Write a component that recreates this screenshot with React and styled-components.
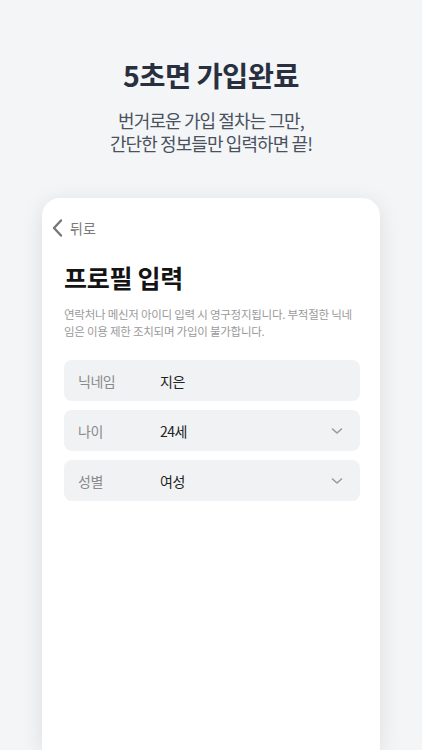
import React from "react";
import styled, { createGlobalStyle } from "styled-components";

const GlobalStyle = createGlobalStyle`
  html, body {
    margin: 0;
    padding: 0;
    background: #f4f5f7;
  }
  body {
    font-family: "Noto Sans CJK KR", "Noto Sans", sans-serif;
    overflow: hidden;
  }
`;

const Page = styled.div`
  height: 750px;
  overflow: hidden;
  background: #f4f5f7;
  display: flex;
  flex-direction: column;
  align-items: center;
`;

const Headline = styled.h1`
  margin: 54px 0 0;
  font-size: 28.5px;
  line-height: 42px;
  font-weight: 700;
  color: #283040;
  letter-spacing: -0.6px;
`;

const SubText = styled.p`
  margin: 13px 0 0;
  font-size: 18px;
  line-height: 23px;
  font-weight: 400;
  color: #4a5260;
  text-align: center;
  letter-spacing: -0.9px;
`;

const Card = styled.div`
  margin-top: 43px;
  width: 338px;
  flex: 1;
  background: #fff;
  border-radius: 18px 18px 0 0;
  box-shadow: 0 4px 22px rgba(0, 0, 0, 0.1);
  padding: 20px 20px 0 22px;
  box-sizing: border-box;
`;

const BackButton = styled.button`
  display: flex;
  align-items: center;
  gap: 4px;
  border: none;
  background: none;
  padding: 0;
  margin-left: -14px;
  font-family: inherit;
  font-size: 14px;
  color: #7a7a7a;
  cursor: pointer;
`;

const Title = styled.h2`
  margin: 22px 0 0;
  font-size: 25px;
  line-height: 34px;
  font-weight: 700;
  color: #141414;
  letter-spacing: -0.3px;
`;

const Notice = styled.p`
  margin: 12px 0 0;
  font-size: 11.5px;
  line-height: 17px;
  color: #9a9a9a;
  letter-spacing: -0.25px;
  padding-right: 4px;
`;

const Fields = styled.div`
  margin-top: 20px;
  display: flex;
  flex-direction: column;
  gap: 9px;
  width: 296px;
`;

const Field = styled.div`
  height: 41px;
  border-radius: 8px;
  background: #f0f2f4;
  display: flex;
  align-items: center;
  padding: 0 17px 0 14px;
`;

const Label = styled.span`
  width: 82px;
  font-size: 14px;
  color: #8a8a8a;
  letter-spacing: -0.5px;
`;

const Value = styled.span`
  flex: 1;
  font-size: 14px;
  color: #222;
  letter-spacing: -0.5px;
`;

const Chevron = () => (
  <svg width="12" height="10" viewBox="0 0 12 10">
    <path d="M1.5 3 L6 7 L10.5 3" fill="none" stroke="#9a9a9a" strokeWidth="1.6" strokeLinecap="round" strokeLinejoin="round" />
  </svg>
);

const BackIcon = () => (
  <svg width="16" height="20" viewBox="0 0 16 20">
    <path d="M11 2.5 L4 10 L11 17.5" fill="none" stroke="#777" strokeWidth="2.4" strokeLinecap="round" strokeLinejoin="round" />
  </svg>
);

const fields = [
  { label: "닉네임", value: "지은" },
  { label: "나이", value: "24세", select: true },
  { label: "성별", value: "여성", select: true },
];

function App() {
  return (
    <>
      <GlobalStyle />
      <Page>
        <Headline>5초면 가입완료</Headline>
        <SubText>
          번거로운 가입 절차는 그만,
          <br />
          간단한 정보들만 입력하면 끝!
        </SubText>
        <Card>
          <BackButton>
            <BackIcon />
            뒤로
          </BackButton>
          <Title>프로필 입력</Title>
          <Notice>
            연락처나 메신저 아이디 입력 시 영구정지됩니다. 부적절한 닉네임은 이용 제한 조치되며 가입이 불가합니다.
          </Notice>
          <Fields>
            {fields.map((f) => (
              <Field key={f.label}>
                <Label>{f.label}</Label>
                <Value>{f.value}</Value>
                {f.select && <Chevron />}
              </Field>
            ))}
          </Fields>
        </Card>
      </Page>
    </>
  );
}

export default App;
